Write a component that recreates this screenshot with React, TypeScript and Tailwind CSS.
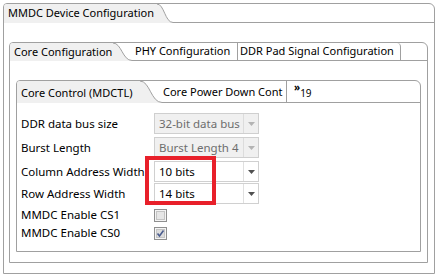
import React from "react";

const font = { fontFamily: '"Noto Sans", "Open Sans", sans-serif' };

function Curve({ w, h }: { w: number; h: number }) {
  const d = `M0 0 C ${w * 0.45} 0 ${w * 0.5} ${h - 0.5} ${w} ${h - 0.5}`;
  return (
    <svg width={w} height={h} className="block shrink-0">
      <path d={`${d} L ${w} ${h} L 0 ${h} Z`} fill="#f0f0f0" />
      <path d={d} stroke="#a0a0a0" fill="none" />
    </svg>
  );
}

function Arrow({ color }: { color: string }) {
  return (
    <svg width="7" height="4" viewBox="0 0 7 4">
      <path d="M0 0 L7 0 L3.5 4 Z" fill={color} />
    </svg>
  );
}

function Combo({ value, disabled }: { value: string; disabled?: boolean }) {
  return (
    <div
      className={
        disabled
          ? "flex w-[105px] h-[21px] border border-[#cfcfcf] bg-[#f0f0f0] text-[#6d6d6d]"
          : "flex w-[105px] h-[21px] border border-[#d0d0d0] bg-white text-black"
      }
    >
      <div className="flex-1 flex items-center pl-[4px] whitespace-nowrap overflow-hidden">{value}</div>
      <div
        className={
          disabled
            ? "w-[15px] border-l border-[#dcdcdc] flex items-center justify-center"
            : "w-[15px] border-l border-[#e0e0e0] flex items-center justify-center"
        }
      >
        <Arrow color={disabled ? "#b4b4b4" : "#505050"} />
      </div>
    </div>
  );
}

function Check({ checked }: { checked?: boolean }) {
  return (
    <svg width="13" height="13" viewBox="0 0 13 13" className="block">
      <rect x="0.5" y="0.5" width="12" height="12" fill="#f4f4f4" stroke="#8f8f8f" />
      <rect x="2.5" y="2.5" width="8" height="8" fill={checked ? "#dcdcdc" : "#e6e6e6"} stroke="#c4c4c4" />
      {checked && <path d="M3.5 6.5 L5.5 9 L9.5 3.5" stroke="#4a5c8e" strokeWidth="1.6" fill="none" />}
    </svg>
  );
}

export default function App() {
  return (
    <div className="relative w-[440px] h-[278px] bg-white text-[11px] text-black pt-[3px]" style={font}>
      <div className="ml-[3px] w-[432px] h-[271px] border border-[#a0a0a0] rounded-tl-[4px] rounded-tr-[6px] flex flex-col">
        <div className="flex h-[19px]">
          <div className="w-[153px] bg-[#f0f0f0] rounded-tl-[3px] pl-[4px] flex items-center whitespace-nowrap">
            MMDC Device Configuration
          </div>
          <Curve w={16} h={19} />
          <div className="flex-1 border-b border-[#a0a0a0]" />
        </div>

        <div className="ml-[5px] mr-[6px] mt-[19px] mb-[10px] flex-1 border border-[#a0a0a0] rounded-tl-[4px] rounded-tr-[6px] flex flex-col">
          <div className="flex h-[18px]">
            <div className="w-[103px] bg-[#f0f0f0] rounded-tl-[3px] pl-[4px] flex items-center whitespace-nowrap">
              Core Configuration
            </div>
            <Curve w={19} h={18} />
            <div className="w-[106px] border-b border-r border-[#a0a0a0] pl-[3px] flex items-center whitespace-nowrap">
              PHY Configuration
            </div>
            <div className="w-[163px] border-b border-r border-[#a0a0a0] rounded-tr-[4px] pl-[2px] flex items-center whitespace-nowrap">
              DDR Pad Signal Configuration
            </div>
            <div className="flex-1 border-b border-[#a0a0a0]" />
          </div>

          <div className="ml-[6px] mr-[6px] mt-[19px] mb-[10px] flex-1 border border-[#a0a0a0] rounded-tl-[4px] rounded-tr-[6px] flex flex-col">
            <div className="flex h-[22px]">
              <div className="w-[123px] bg-[#f0f0f0] rounded-tl-[3px] pl-[4px] pt-[2px] flex items-center whitespace-nowrap">
                Core Control (MDCTL)
              </div>
              <Curve w={22} h={22} />
              <div className="w-[125px] border-b border-r border-[#a0a0a0] pt-[2px] pl-[1px] flex items-center whitespace-nowrap overflow-hidden">
                Core Power Down Cont
              </div>
              <div className="flex-1 border-b border-[#a0a0a0] pl-[7px] flex items-start">
                <span className="text-[10px] font-bold leading-none mt-[1px]">»</span>
                <span className="text-[10px] leading-none mt-[7px]">19</span>
              </div>
            </div>

            <div className="flex-1 pl-[4px] pt-[10px] flex flex-col text-[11.5px]">
              <div className="flex items-center h-[21px]">
                <div className="w-[133px]">DDR data bus size</div>
                <Combo value="32-bit data bus" disabled />
              </div>
              <div className="flex items-center h-[21px] mt-[3px]">
                <div className="w-[133px]">Burst Length</div>
                <Combo value="Burst Length 4" disabled />
              </div>
              <div className="flex items-center h-[21px] mt-[3px]">
                <div className="w-[133px] whitespace-nowrap">Column Address Width</div>
                <Combo value="10 bits" />
              </div>
              <div className="flex items-center h-[21px] mt-[1px]">
                <div className="w-[133px]">Row Address Width</div>
                <Combo value="14 bits" />
              </div>
              <div className="flex items-center h-[18px] mt-[2px]">
                <div className="w-[133px]">MMDC Enable CS1</div>
                <Check />
              </div>
              <div className="flex items-center h-[18px]">
                <div className="w-[133px]">MMDC Enable CS0</div>
                <Check checked />
              </div>
            </div>
          </div>
        </div>
      </div>

      <div className="absolute left-[145px] top-[156px] w-[71px] h-[49px] border-4 border-[#e8202a]" />
    </div>
  );
}
